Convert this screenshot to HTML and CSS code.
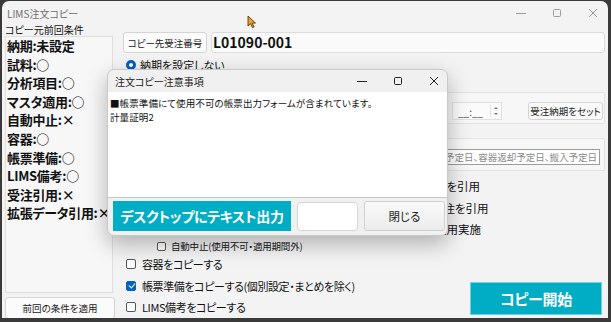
FILE: index.html
```html
<!DOCTYPE html>
<html lang="ja">

<head>
    <meta charset="UTF-8" />
    <title>LIMS注文コピー</title>
    <link rel="stylesheet" href="styles.css">
</head>

<body>

    <div class="window">
        <div class="titlebar">
            <span class="title">LIMS注文コピー</span>
            <div class="caption-btns">
                <svg width="10" height="10" viewBox="0 0 10 10"><path d="M0 5.5h10" stroke="#9a9a9a" /></svg>
                <svg width="10" height="10" viewBox="0 0 10 10"><rect x="1.5" y="1.5" width="7" height="7" rx="1" fill="none" stroke="#9a9a9a" /></svg>
                <svg width="10" height="10" viewBox="0 0 10 10"><path d="M1 1l8 8M9 1l-8 8" stroke="#9a9a9a" /></svg>
            </div>
        </div>

        <div class="client">
            <div class="left">
                <div class="caption">コピー元前回条件</div>
                <div class="cond-box">
                    <div class="cond">納期:未設定</div>
                    <div class="cond">試料:○</div>
                    <div class="cond">分析項目:○</div>
                    <div class="cond">マスタ適用:○</div>
                    <div class="cond">自動中止:×</div>
                    <div class="cond">容器:○</div>
                    <div class="cond">帳票準備:○</div>
                    <div class="cond">LIMS備考:○</div>
                    <div class="cond">受注引用:×</div>
                    <div class="cond">拡張データ引用:×</div>
                </div>
                <button class="btn apply">前回の条件を適用</button>
            </div>

            <div class="right">
                <div class="order-row">
                    <button class="btn order-btn">コピー先受注番号</button>
                    <div class="order-input">L01090-001</div>
                </div>

                <div class="radio-row">
                    <span class="radio"></span>
                    <span>納期を設定しない</span>
                </div>

                <div class="group due">
                    <div class="time-input">
                        <span>__:__</span>
                        <span class="spin">
                            <svg width="6" height="12" viewBox="0 0 6 12"><path d="M1 4l2-2 2 2z M1 8l2 2 2-2z" fill="#777" /></svg>
                        </span>
                    </div>
                    <button class="btn set-btn">受注納期をセット</button>
                </div>

                <div class="group dates">
                    <div class="date-input">出荷予定日、容器返却予定日、搬入予定日</div>
                </div>

                <!-- the start of these three rows is hidden by the dialog -->
                <div class="opts">
                    <div class="opt r22 behind b1">料を引用</div>
                    <div class="opt r22 behind b2">受注を引用</div>
                    <div class="opt r20 behind b3">適用実施</div>
                    <div class="opt sub"><span class="chk small"></span>自動中止(使用不可・適用期間外)</div>
                    <div class="opt r22"><span class="chk"></span>容器をコピーする</div>
                    <div class="bottom-row">
                        <div class="bottom-opts">
                            <div class="opt r21"><span class="chk on"></span>帳票準備をコピーする(個別設定・まとめを除く)</div>
                            <div class="opt r21"><span class="chk"></span>LIMS備考をコピーする</div>
                        </div>
                        <button class="start-btn">コピー開始</button>
                    </div>
                </div>
            </div>
        </div>

        <div class="dialog">
            <div class="dlg-title">
                <span>注文コピー注意事項</span>
                <div class="dlg-btns">
                    <svg width="10" height="10" viewBox="0 0 10 10"><path d="M0 5.5h10" stroke="#222" /></svg>
                    <svg width="10" height="10" viewBox="0 0 10 10"><rect x="1.5" y="1.5" width="7" height="7" rx="1" fill="none" stroke="#222" /></svg>
                    <svg width="10" height="10" viewBox="0 0 10 10"><path d="M1 1l8 8M9 1l-8 8" stroke="#222" /></svg>
                </div>
            </div>
            <div class="dlg-body">
                <p>■帳票準備にて使用不可の帳票出力フォームが含まれています。</p>
                <p>計量証明2</p>
            </div>
            <div class="dlg-foot">
                <button class="teal-btn">デスクトップにテキスト出力</button>
                <div class="dlg-box"></div>
                <button class="btn close-btn">閉じる</button>
            </div>
        </div>

        <svg class="cursor" width="10" height="14" viewBox="0 0 10 14">
            <path d="M1 1v10l2.5-2.3 2 4 1.6-.8-2-3.8H8.5z" fill="#f0a020" stroke="#3a2a10" stroke-width="0.8" />
        </svg>
    </div>

</body>

</html>
```

FILE: styles.css
```css
* {
    box-sizing: border-box;
    margin: 0;
    padding: 0;
    font-family: "Noto Sans CJK JP", "Noto Sans", sans-serif;
    font-feature-settings: "palt";
}

body {
    background: #3a3a3a;
    width: 611px;
    height: 322px;
    overflow: hidden;
}

.window {
    position: relative;
    margin: 1px 0 0 2px;
    width: 606px;
    height: 317px;
    background: #f3f3f3;
    border-radius: 7px 7px 0 0;
    overflow: hidden;
    color: #111;
}

.titlebar {
    height: 24px;
    display: flex;
    align-items: center;
    justify-content: space-between;
    padding-left: 5px;
}

.title {
    font-size: 10px;
    color: #707070;
}

.caption-btns {
    display: flex;
    gap: 26px;
    padding-right: 10px;
}

.client {
    display: flex;
    gap: 8px;
    padding-left: 3px;
}

/* left side: previous copy conditions */
.left {
    width: 110px;
    display: flex;
    flex-direction: column;
}

.caption {
    font-size: 10px;
    line-height: 9px;
    height: 12px;
}

.cond-box {
    margin-top: -1px;
    width: 108px;
    height: 257px;
    background: #f7f7f7;
    border: 1px solid #dedede;
    white-space: nowrap;
    padding: 0 0 0 1px;
}

.cond {
    font-size: 13px;
    font-weight: 700;
    line-height: 18.6px;
    letter-spacing: -0.3px;
}

.btn {
    background: #fbfbfb;
    border: 1px solid #d4d4d4;
    border-radius: 3px;
    font-size: 9.5px;
    color: #222;
}

.apply {
    margin-top: 4px;
    width: 110px;
    height: 22px;
}

/* right side */
.right {
    width: 482px;
    display: flex;
    flex-direction: column;
}

.order-row {
    margin-top: 7px;
    height: 21px;
    display: flex;
    gap: 4px;
}

.order-btn {
    width: 84px;
}

.order-input {
    flex: 1;
    background: #fafafa;
    border: 1px solid #dcdcdc;
    border-radius: 3px;
    font-size: 14px;
    font-weight: 700;
    line-height: 19px;
    padding-left: 1px;
}

.radio-row {
    margin-top: 6px;
    height: 12px;
    display: flex;
    align-items: center;
    gap: 4px;
    font-size: 11px;
    padding-left: 3px;
}

.radio {
    width: 10px;
    height: 10px;
    border-radius: 50%;
    border: 3px solid #0060b8;
    background: #fff;
}

.group {
    background: #f7f7f7;
    border: 1px solid #e2e2e2;
    border-radius: 2px;
    display: flex;
    justify-content: flex-end;
}

.due {
    margin-top: 21px;
    height: 32px;
    gap: 26px;
    padding: 9px 1px 0 0;
    align-items: flex-start;
}

.time-input {
    width: 50px;
    height: 18px;
    background: #fbfbfb;
    border: 1px solid #e0e0e0;
    display: flex;
    justify-content: space-between;
    align-items: center;
    padding: 0 2px 0 5px;
    font-size: 10px;
    color: #444;
}

.spin {
    display: flex;
    border-left: 1px solid #e4e4e4;
    padding-left: 2px;
}

.set-btn {
    width: 75px;
    height: 18px;
    font-size: 9.5px;
}

.dates {
    margin-top: 14px;
    height: 33px;
    padding: 10px 4px 0 0;
}

.date-input {
    width: 400px;
    height: 16px;
    background: #fff;
    border: 1px solid #9c9c9c;
    font-size: 9.5px;
    line-height: 14px;
    color: #8a8a8a;
    text-align: right;
    padding-right: 2px;
}

.opts {
    margin-top: 4px;
    display: flex;
    flex-direction: column;
}

.opt {
    display: flex;
    align-items: center;
    gap: 6px;
    padding-left: 3px;
    font-size: 11px;
    letter-spacing: -0.4px;
    white-space: nowrap;
}

.r22 { height: 22px; }
.r21 { height: 21px; }
.r20 { height: 20px; }

.opt.behind { font-size: 11.5px; letter-spacing: 0; }
.opt.b1 { padding-left: 312px; }
.opt.b2 { padding-left: 309px; }
.opt.b3 { padding-left: 312px; }

.opt.sub {
    height: 14px;
    padding-left: 34px;
    gap: 5px;
    font-size: 9.5px;
    letter-spacing: -0.2px;
}

.chk {
    width: 10px;
    height: 10px;
    border: 1px solid #555;
    border-radius: 2px;
    background: #fff;
    position: relative;
    flex-shrink: 0;
}

.chk.small {
    width: 9px;
    height: 9px;
}

.chk.on {
    background: #0064c0;
    border-color: #0064c0;
}

.chk.on::after {
    content: "";
    position: absolute;
    left: 2.5px;
    top: 0.5px;
    width: 3px;
    height: 5px;
    border: solid #fff;
    border-width: 0 1.2px 1.2px 0;
    transform: rotate(40deg);
}

.bottom-row {
    display: flex;
    justify-content: space-between;
    align-items: flex-start;
}

.start-btn {
    margin-top: 7px;
    margin-right: 3px;
    width: 132px;
    height: 33px;
    background: #00adc4;
    border: 1px solid #6fd3e1;
    color: #fff;
    font-size: 15px;
    font-weight: 700;
    letter-spacing: -0.3px;
}

/* warning dialog on top of the form */
.dialog {
    position: absolute;
    left: 105px;
    top: 68px;
    width: 341px;
    height: 167px;
    background: #f0f0f0;
    border: 1px solid #c9c9c9;
    border-radius: 7px;
    box-shadow: 0 8px 22px rgba(0, 0, 0, 0.28);
    overflow: hidden;
    display: flex;
    flex-direction: column;
}

.dlg-title {
    height: 22px;
    display: flex;
    align-items: center;
    justify-content: space-between;
    padding-left: 7px;
    font-size: 10px;
    color: #222;
}

.dlg-btns {
    display: flex;
    gap: 26px;
    padding-right: 8px;
}

.dlg-body {
    height: 106px;
    background: #fff;
    border-bottom: 1px solid #c8c8c8;
    padding: 4px 0 0 2px;
    font-size: 9.5px;
    line-height: 14px;
    letter-spacing: 0.1px;
}

.dlg-foot {
    display: flex;
    gap: 6px;
    padding: 3px 0 0 5px;
}

.teal-btn {
    width: 178px;
    height: 30px;
    background: #00adc4;
    border: none;
    color: #fff;
    font-size: 14px;
    font-weight: 700;
    letter-spacing: -0.3px;
}

.dlg-box {
    width: 61px;
    height: 29px;
    margin-top: 1px;
    background: #fff;
    border: 1px solid #d6d6d6;
    border-radius: 4px;
}

.close-btn {
    width: 81px;
    height: 30px;
    font-size: 11.5px;
    background: linear-gradient(#fafafa, #ececec);
    border-color: #d0d0d0;
}

.cursor {
    position: absolute;
    left: 245px;
    top: 14px;
}
```
